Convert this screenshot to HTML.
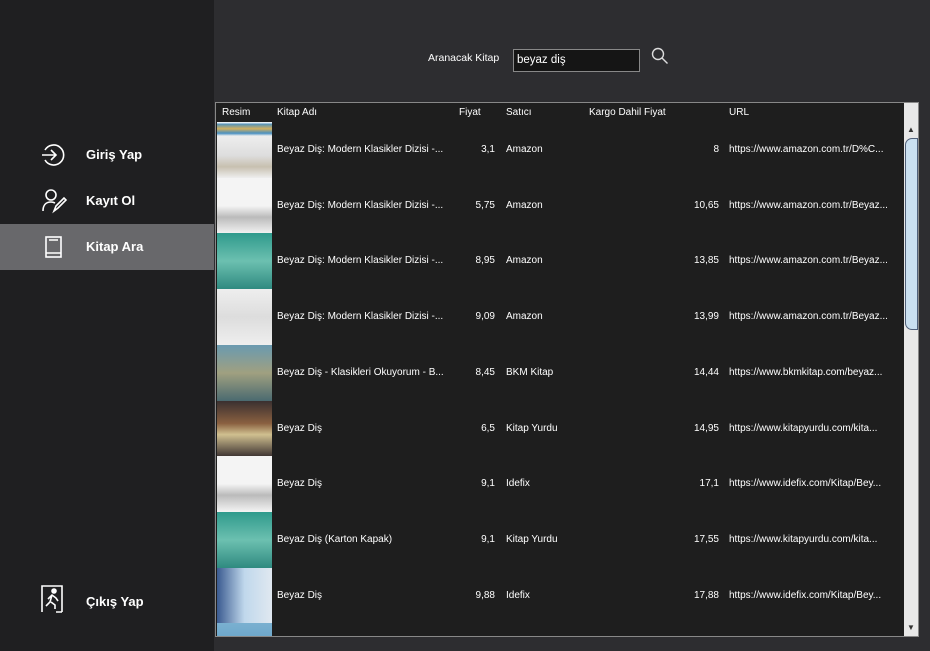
<!DOCTYPE html>
<html><head><meta charset="utf-8"><style>
*{margin:0;padding:0;box-sizing:border-box}
body{width:930px;height:651px;background:#2d2d30;font-family:"Liberation Sans",sans-serif;position:relative;overflow:hidden;color:#fff}
#side{position:absolute;left:0;top:0;width:214px;height:651px;background:#1f1f21}
.nav{position:absolute;left:0;width:214px;height:46px;font-weight:bold;font-size:13px}
.nav span{position:absolute;left:86px;top:15px}
.nav svg{position:absolute;left:40px;top:10px}
.sel{background:#68686b}
.lbl{position:absolute;font-size:10.5px}
#search{position:absolute;left:513px;top:49px;width:127px;height:23px;background:#151515;border:1px solid #888;font-size:11.5px;padding:4px 3px}
#tbl{position:absolute;left:215px;top:102px;width:704px;height:535px;border:1px solid #888;background:#1e1e1e;overflow:hidden}
.hdr{position:absolute;left:0;top:0;width:688px;height:19px;background:#1e1e1e;font-size:10px}
.hdr div,.row div{position:absolute;white-space:nowrap}
.row{position:absolute;left:0;width:688px;height:56px;font-size:10px}
.row .img{left:1px;top:0;width:55px;height:56px}
#sb{position:absolute;left:688px;top:0;width:14px;height:533px;background:#e8e8e8}
#thumb{position:absolute;left:1px;top:35px;width:13px;height:192px;background:#c9dff0;border:1px solid #50607a;border-radius:7px 0 0 7px}
</style></head><body>
<div id="side">
<div class="nav" style="top:132px"><svg width="26" height="26" viewBox="0 0 26 26" fill="none" stroke="#fff" stroke-width="1.6"><path d="M5 8 A10 10 0 1 1 5 18"/><path d="M2 13h14M11 8l5 5-5 5"/></svg><span>Giriş Yap</span></div>
<div class="nav" style="top:178px"><svg width="28" height="26" viewBox="0 0 28 26" fill="none" stroke="#fff" stroke-width="1.6"><circle cx="11" cy="7" r="5"/><path d="M3 23c0-6 3-9 8-9 2 0 3 .5 4 1"/><path d="M14 23l2-5 8-8 2 2-8 8z"/></svg><span>Kayıt Ol</span></div>
<div class="nav sel" style="top:224px"><svg width="26" height="26" viewBox="0 0 26 26" fill="none" stroke="#fff" stroke-width="1.6"><rect x="6" y="3" width="15" height="20"/><path d="M6 19h15M9 6h9"/></svg><span>Kitap Ara</span></div>
<div class="nav" style="top:578px"><svg width="26" height="30" viewBox="0 0 26 30" fill="none" stroke="#fff" stroke-width="1.6" style="top:6px"><path d="M2 28V2h20v26M16 28h6"/><circle cx="14" cy="7" r="2" fill="#fff"/><path d="M8 15l4-4 4 3 2 3M12 11l-2 7-4 4M11 18l4 3v4"/></svg><span style="top:16px">Çıkış Yap</span></div>
</div>
<div class="lbl" style="left:428px;top:52px">Aranacak Kitap</div>
<div id="search">beyaz diş</div>
<svg style="position:absolute;left:651px;top:47px" width="18" height="18" viewBox="0 0 18 18" fill="none" stroke="#ddd" stroke-width="1.4"><circle cx="7" cy="7" r="5.5"/><path d="M11 11l5.5 5.5"/></svg>
<div id="tbl">
<div class="hdr"><div style="left:6px;top:4px">Resim</div><div style="left:61px;top:4px">Kitap Adı</div><div style="left:243px;top:4px">Fiyat</div><div style="left:290px;top:4px">Satıcı</div><div style="left:373px;top:4px">Kargo Dahil Fiyat</div><div style="left:513px;top:4px">URL</div></div>
<div id="rows"></div>
<div id="sb"><div style="position:absolute;left:3px;top:22px;font-size:8px;color:#333">▲</div><div id="thumb"></div><div style="position:absolute;left:3px;top:520px;font-size:8px;color:#333">▼</div></div>
</div>
<script>
var d=[["linear-gradient(#e8f0f4 0 3%,#4a90c0 3%,#d0b060 12%,#4a90c0 20%,#eee 25%,#ddd 60%,#c8c0b0 80%,#eee)","Beyaz Diş: Modern Klasikler Dizisi -...","3,1","Amazon","8","https://www.amazon.com.tr/D%C..."],
["linear-gradient(#f4f4f4 0 50%,#bbb 70%,#f4f4f4)","Beyaz Diş: Modern Klasikler Dizisi -...","5,75","Amazon","10,65","https://www.amazon.com.tr/Beyaz..."],
["linear-gradient(#2f9a8c,#6cc0b0,#2f8a80)","Beyaz Diş: Modern Klasikler Dizisi -...","8,95","Amazon","13,85","https://www.amazon.com.tr/Beyaz..."],
["linear-gradient(#eee,#ddd 50%,#eee)","Beyaz Diş: Modern Klasikler Dizisi -...","9,09","Amazon","13,99","https://www.amazon.com.tr/Beyaz..."],
["linear-gradient(#6a9ab0,#a0a080,#4a6a70)","Beyaz Diş - Klasikleri Okuyorum - B...","8,45","BKM Kitap","14,44","https://www.bkmkitap.com/beyaz..."],
["linear-gradient(#3a3030,#8a6040 40%,#d0c090 60%,#3a3030)","Beyaz Diş","6,5","Kitap Yurdu","14,95","https://www.kitapyurdu.com/kita..."],
["linear-gradient(#f4f4f4 0 50%,#bbb 70%,#f4f4f4)","Beyaz Diş","9,1","Idefix","17,1","https://www.idefix.com/Kitap/Bey..."],
["linear-gradient(#2f9a8c,#6cc0b0,#2f8a80)","Beyaz Diş (Karton Kapak)","9,1","Kitap Yurdu","17,55","https://www.kitapyurdu.com/kita..."],
["linear-gradient(90deg,#3a5a90,#c0d8ec 50%,#e0e8f0)","Beyaz Diş","9,88","Idefix","17,88","https://www.idefix.com/Kitap/Bey..."],
["linear-gradient(#7ab0d0,#4a90c0)","","","","",""]];
var h="";d.forEach(function(r,i){var t=19+i*55.7;
h+='<div class="row" style="top:'+t+'px"><div class="img" style="background:'+r[0]+'"></div><div style="left:61px;top:22px">'+r[1]+'</div><div style="right:409px;top:22px">'+r[2]+'</div><div style="left:290px;top:22px">'+r[3]+'</div><div style="right:185px;top:22px">'+r[4]+'</div><div style="left:513px;top:22px">'+r[5]+'</div></div>';});
document.getElementById("rows").innerHTML=h;
</script>
</body></html>
